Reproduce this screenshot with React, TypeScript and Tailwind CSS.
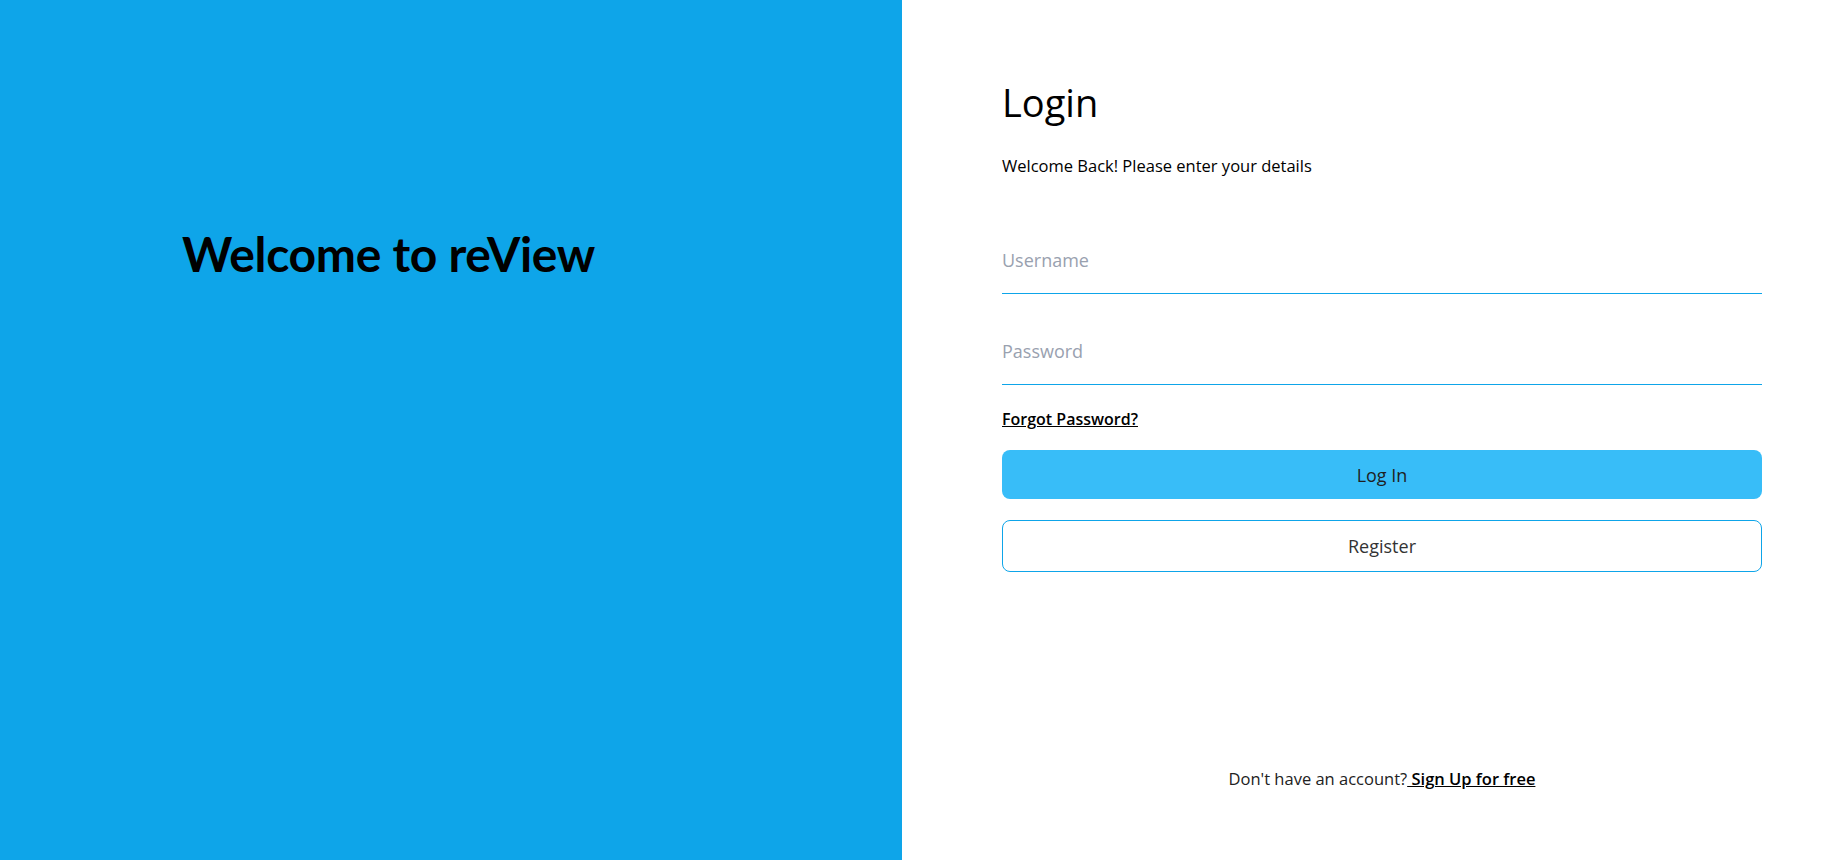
import React from "react";

const font = { fontFamily: '"Open Sans", "Noto Sans", sans-serif' };
const headFont = { fontFamily: 'Lato, "Open Sans", sans-serif' };

const LoginForm = () => {
  return (
    <div className="flex h-screen flex-1 flex-col bg-white pl-[100px] pr-[65px]">
      <h2 className="mt-[79px] text-[38px] leading-[46px] font-normal text-black">Login</h2>
      <p className="mt-[29px] text-[16.5px] leading-6 text-black">Welcome Back! Please enter your details</p>

      <input
        type="text"
        placeholder="Username"
        className="mt-[62px] h-[54px] w-full border-b border-[#0ea5e9] bg-transparent pb-[13px] text-lg outline-none placeholder:text-gray-400"
      />
      <input
        type="password"
        placeholder="Password"
        className="mt-[37px] h-[54px] w-full border-b border-[#0ea5e9] bg-transparent pb-[13px] text-lg outline-none placeholder:text-gray-400"
      />

      <a href="#" className="mt-[22px] self-start text-base leading-6 font-semibold text-black underline">
        Forgot Password?
      </a>

      <button className="mt-[19px] h-[49px] w-full rounded-lg bg-[#38bdf8] text-lg text-[#1f1f1f]">Log In</button>
      <button className="mt-[21px] h-[52px] w-full rounded-lg border border-[#0ea5e9] bg-white text-lg text-[#333]">
        Register
      </button>

      <p className="mt-auto mb-[69px] text-center text-[16.5px] leading-6 text-[#222]">
        Don't have an account?
        <a href="#" className="font-semibold text-black underline">
          {" Sign Up for free"}
        </a>
      </p>
    </div>
  );
};

const App = () => {
  return (
    <div className="flex h-screen w-full overflow-hidden" style={font}>
      <div className="h-screen w-[902px] shrink-0 bg-[#0ea5e9] pt-[230px] pl-[182px]">
        <h1 className="text-5xl font-bold tracking-[-0.3px] text-black" style={headFont}>
          Welcome to reView
        </h1>
      </div>
      <LoginForm />
    </div>
  );
};

export default App;
